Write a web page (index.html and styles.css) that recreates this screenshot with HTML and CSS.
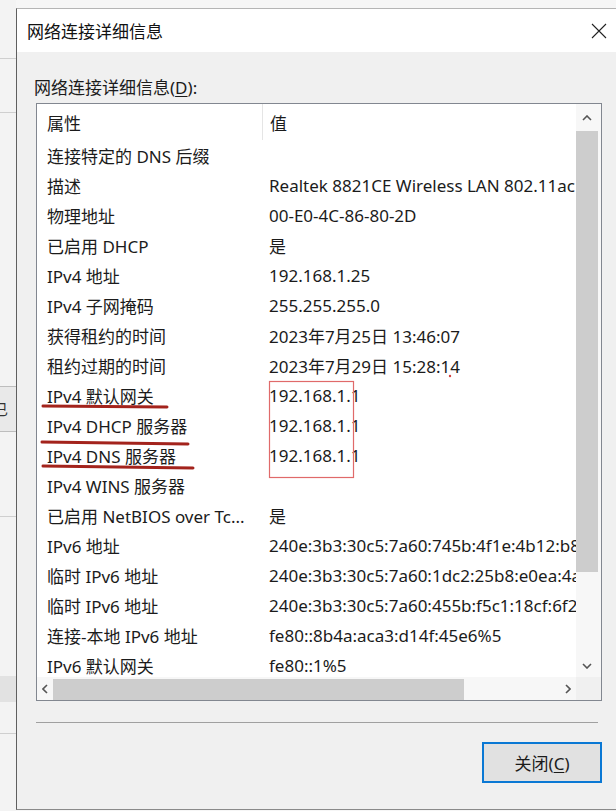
FILE: index.html
```html
<!DOCTYPE html>
<html lang="zh-CN">
<head>
<meta charset="utf-8">
<title>网络连接详细信息</title>
<link rel="stylesheet" href="styles.css">
</head>
<body>
<div class="desk">
  <div class="behind">
    <div class="bline l1"></div>
    <div class="bline l2"></div>
    <div class="bbox"><span class="bglyph">已</span></div>
    <div class="bline l3"></div>
    <div class="bblock"></div>
    <div class="bline l4"></div>
  </div>

  <div class="dialog">
    <div class="titlebar">
      <span class="title">网络连接详细信息</span>
      <span class="close">
        <svg width="16" height="16" viewBox="0 0 16 16"><path d="M1 1 L15 15 M15 1 L1 15" stroke="#222" stroke-width="1.1" fill="none"/></svg>
      </span>
    </div>

    <div class="content">
      <div class="label">网络连接详细信息(<u>D</u>):</div>

      <div class="listbox">
        <div class="main">
          <div class="viewport">
            <div class="row head"><div class="c1">属性</div><div class="c2">值</div></div>
            <div class="row"><div class="c1">连接特定的 DNS 后缀</div><div class="c2"></div></div>
            <div class="row"><div class="c1">描述</div><div class="c2">Realtek 8821CE Wireless LAN 802.11ac PCI-E NIC</div></div>
            <div class="row"><div class="c1">物理地址</div><div class="c2">00-E0-4C-86-80-2D</div></div>
            <div class="row"><div class="c1">已启用 DHCP</div><div class="c2">是</div></div>
            <div class="row"><div class="c1">IPv4 地址</div><div class="c2">192.168.1.25</div></div>
            <div class="row"><div class="c1">IPv4 子网掩码</div><div class="c2">255.255.255.0</div></div>
            <div class="row"><div class="c1">获得租约的时间</div><div class="c2">2023年7月25日 13:46:07</div></div>
            <div class="row"><div class="c1">租约过期的时间</div><div class="c2">2023年7月29日 15:28:14</div></div>
            <div class="row"><div class="c1">IPv4 默认网关</div><div class="c2">192.168.1.1</div></div>
            <div class="row"><div class="c1">IPv4 DHCP 服务器</div><div class="c2">192.168.1.1</div></div>
            <div class="row"><div class="c1">IPv4 DNS 服务器</div><div class="c2">192.168.1.1</div></div>
            <div class="row"><div class="c1">IPv4 WINS 服务器</div><div class="c2"></div></div>
            <div class="row"><div class="c1">已启用 NetBIOS over Tc...</div><div class="c2">是</div></div>
            <div class="row"><div class="c1">IPv6 地址</div><div class="c2">240e:3b3:30c5:7a60:745b:4f1e:4b12:b8c1</div></div>
            <div class="row"><div class="c1">临时 IPv6 地址</div><div class="c2">240e:3b3:30c5:7a60:1dc2:25b8:e0ea:4a17</div></div>
            <div class="row"><div class="c1">临时 IPv6 地址</div><div class="c2">240e:3b3:30c5:7a60:455b:f5c1:18cf:6f22</div></div>
            <div class="row"><div class="c1">连接-本地 IPv6 地址</div><div class="c2">fe80::8b4a:aca3:d14f:45e6%5</div></div>
            <div class="row"><div class="c1">IPv6 默认网关</div><div class="c2">fe80::1%5</div></div>
          </div>
          <div class="vscroll">
            <div class="arrow">
              <svg width="10" height="6" viewBox="0 0 10 6"><path d="M1 5 L5 1 L9 5" stroke="#555" stroke-width="1.6" fill="none"/></svg>
            </div>
            <div class="vtrack"><div class="vthumb"></div></div>
            <div class="arrow">
              <svg width="10" height="6" viewBox="0 0 10 6"><path d="M1 1 L5 5 L9 1" stroke="#555" stroke-width="1.6" fill="none"/></svg>
            </div>
          </div>
        </div>
        <div class="hbar">
          <div class="hscroll">
            <div class="harrow">
              <svg width="6" height="10" viewBox="0 0 6 10"><path d="M5 1 L1 5 L5 9" stroke="#555" stroke-width="1.6" fill="none"/></svg>
            </div>
            <div class="htrack"><div class="hthumb"></div></div>
            <div class="harrow">
              <svg width="6" height="10" viewBox="0 0 6 10"><path d="M1 1 L5 5 L1 9" stroke="#555" stroke-width="1.6" fill="none"/></svg>
            </div>
          </div>
          <div class="corner"></div>
        </div>

        <!-- hand-drawn marks over the gateway / DHCP / DNS rows -->
        <svg class="marks" width="566" height="400" viewBox="0 0 566 400">
          <path d="M7 303 L131 304" stroke="#a3231c" stroke-width="3" fill="none" stroke-linecap="round"/>
          <path d="M6 339 L152 341" stroke="#a3231c" stroke-width="3" fill="none" stroke-linecap="round"/>
          <path d="M7 363 L157 365" stroke="#a3231c" stroke-width="3" fill="none" stroke-linecap="round"/>
          <rect x="233.5" y="278.5" width="84" height="96" stroke="#e06a6a" stroke-width="1.2" fill="none"/>
          <circle cx="414" cy="273" r="1.2" fill="#d04040"/>
        </svg>
      </div>

      <div class="sep"></div>

      <div class="actions">
        <button class="btn">关闭(<u>C</u>)</button>
      </div>
    </div>
  </div>
</div>
</body>
</html>
```

FILE: styles.css
```css
html, body {
  margin: 0;
  padding: 0;
}

body {
  width: 616px;
  height: 811px;
  overflow: hidden;
  background: #f6f6f6;
  font-family: "Noto Sans", "Noto Sans CJK SC", sans-serif;
  font-size: 17px;
  color: #1b1b1b;
}

.desk {
  display: flex;
  height: 811px;
}

/* window partly visible behind the dialog */
.behind {
  width: 16px;
  flex: none;
  position: relative;
  background: #f3f3f3;
  overflow: hidden;
}

.bline {
  position: absolute;
  left: 0;
  right: 0;
  height: 1px;
  background: #cfcfcf;
}
.l1 { top: 58px; }
.l2 { top: 112px; }
.l3 { top: 516px; }
.l4 { top: 733px; }

.bbox {
  position: absolute;
  left: 0;
  right: 0;
  top: 386px;
  height: 44px;
  border-top: 1px solid #bdbdbd;
  border-bottom: 1px solid #bdbdbd;
  background: #e9e9e9;
}

.bglyph {
  position: absolute;
  left: -7px;
  top: 12px;
  font-size: 15px;
  line-height: 20px;
  color: #333;
}

.bblock {
  position: absolute;
  left: 0;
  right: 0;
  top: 676px;
  height: 26px;
  background: #e2e2e2;
}

.dialog {
  flex: 1;
  margin-top: 8px;
  height: 800px;
  border-left: 1px solid #5f5f5f;
  border-top: 1px solid #b5b5b5;
  border-bottom: 1px solid #8a8a8a;
  background: #f0f0f0;
  display: flex;
  flex-direction: column;
}

.titlebar {
  height: 43px;
  background: #ffffff;
  display: flex;
  align-items: center;
  justify-content: space-between;
  padding: 0 9px 0 10px;
  flex: none;
}

.title {
  font-size: 17px;
  color: #111;
}

.close {
  display: flex;
  align-items: center;
}

.content {
  padding: 25px 0 0 19px;
  display: flex;
  flex-direction: column;
}

.label {
  line-height: 22px;
  height: 22px;
  margin-left: -2px;
  margin-bottom: 4px;
}

.label u,
.btn u {
  text-decoration-thickness: 1px;
  text-underline-offset: 2px;
}

.listbox {
  position: relative;
  width: 564px;
  border: 1px solid #828790;
  background: #ffffff;
}

.main {
  display: flex;
  height: 573px;
}

.viewport {
  width: 539px;
  overflow: hidden;
}

.row {
  display: flex;
  height: 30px;
  align-items: center;
  white-space: nowrap;
}

.row.head {
  height: 36px;
}

.c1 {
  width: 215px;
  flex: none;
  padding-left: 10px;
  overflow: hidden;
}

.c2 {
  padding-left: 7px;
  flex: none;
}

.head .c1,
.head .c2 {
  align-self: stretch;
  display: flex;
  align-items: center;
}

.head .c2 {
  border-left: 1px solid #e5e5e5;
  padding-left: 7px;
}

.vscroll {
  width: 25px;
  display: flex;
  flex-direction: column;
  background: #f7f7f7;
}

.arrow {
  height: 27px;
  display: flex;
  align-items: center;
  justify-content: center;
  flex: none;
  padding-right: 3px;
}

.vscroll .arrow:last-child {
  height: 22px;
}

.vtrack {
  flex: 1;
  padding-right: 3px;
}

.vthumb {
  height: 441px;
  background: #cdcdcd;
}

.hbar {
  display: flex;
  height: 23px;
}

.hscroll {
  width: 539px;
  display: flex;
  background: #f7f7f7;
}

.harrow {
  width: 16px;
  display: flex;
  align-items: center;
  justify-content: center;
  flex: none;
}

.htrack {
  flex: 1;
  padding-top: 2px;
}

.hthumb {
  width: 411px;
  height: 21px;
  background: #cdcdcd;
}

.corner {
  width: 25px;
  background: #f0f0f0;
}

.marks {
  position: absolute;
  left: -1px;
  top: -1px;
  pointer-events: none;
}

.sep {
  width: 562px;
  height: 1px;
  background: #a0a0a0;
  margin-top: 21px;
}

.actions {
  width: 566px;
  display: flex;
  justify-content: flex-end;
  margin-top: 19px;
}

.btn {
  width: 120px;
  height: 41px;
  border: 2px solid #0a78d4;
  background: #e1e1e1;
  font-family: "Noto Sans", "Noto Sans CJK SC", sans-serif;
  font-size: 17px;
  color: #1b1b1b;
  padding: 0;
  margin: 0;
}
```
